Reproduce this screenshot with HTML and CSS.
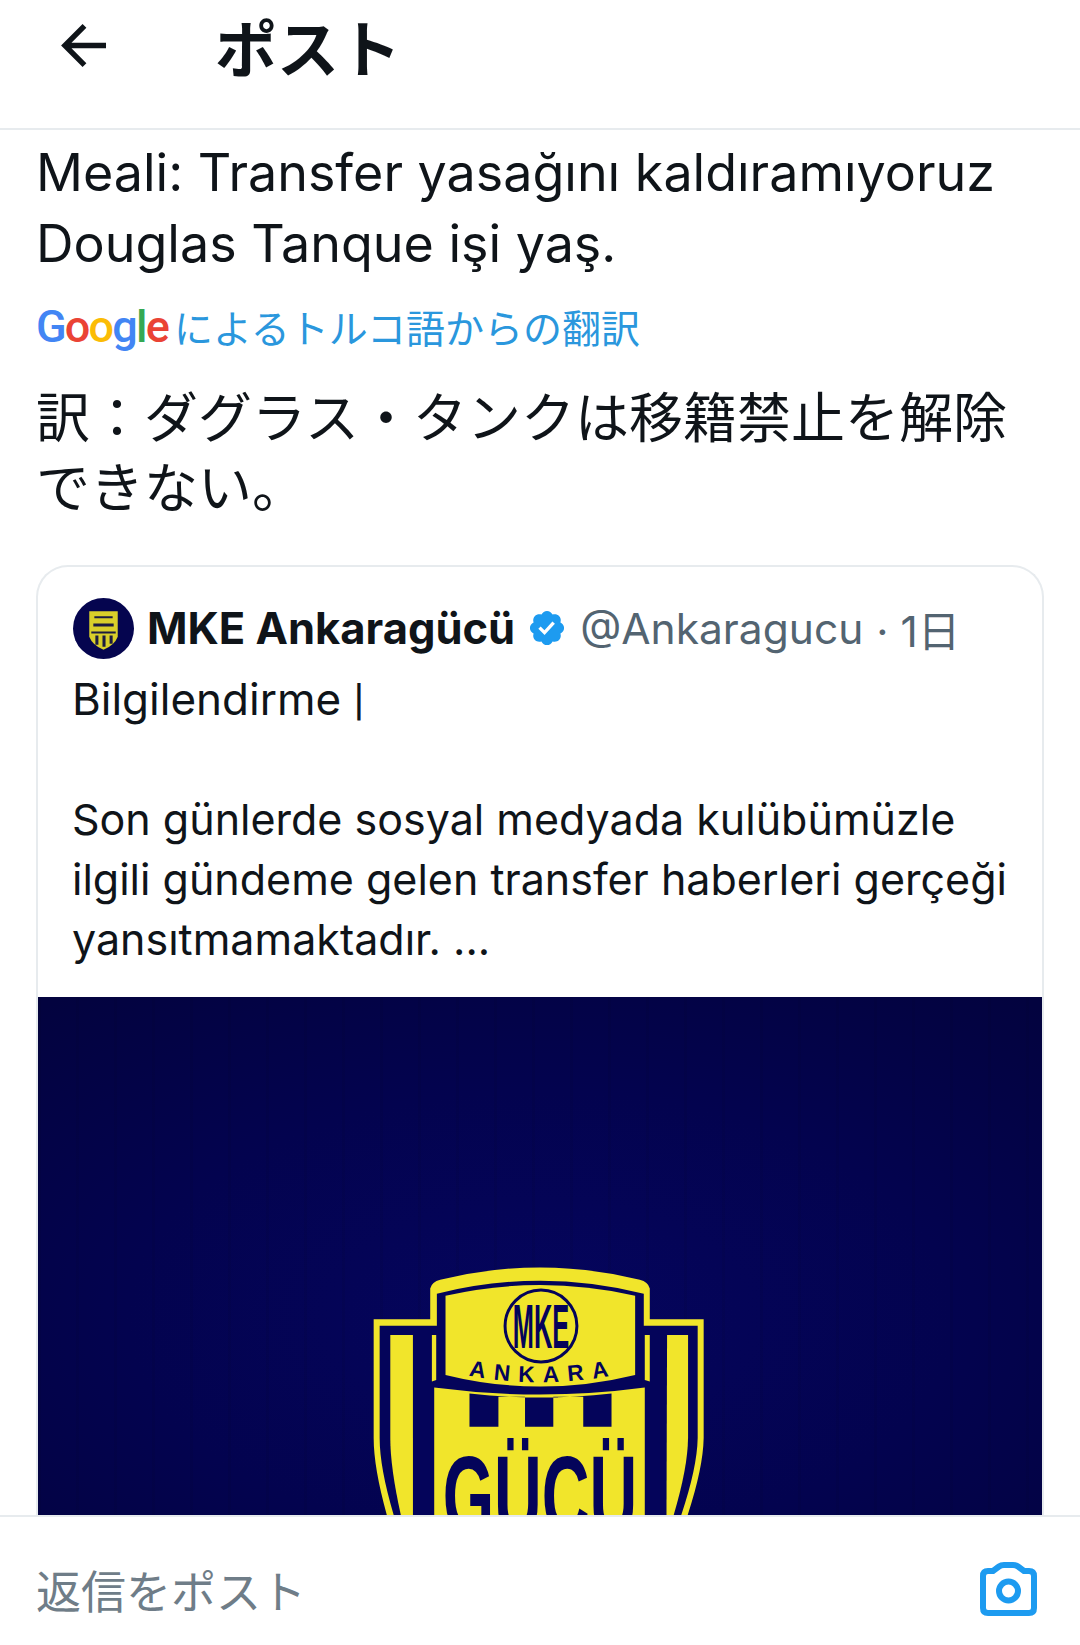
FILE: index.html
```html
<!DOCTYPE html>
<html lang="tr">

<head>
    <meta charset="UTF-8">
    <meta name="viewport" content="width=device-width, initial-scale=1.0">
    <link rel="stylesheet" href="styles.css">
</head>

<body>
    <div class="page">
        <header class="topbar">
            <svg class="back-icon" viewBox="0 0 48 48">
                <path d="M47 24H5M25 4L5 24l20 20" />
            </svg>
            <strong class="title" lang="ja">ポスト</strong>
        </header>

        <main class="content">
            <p class="tweet-text">Meali: Transfer yasağını kaldıramıyoruz<br>Douglas Tanque işi yaş.</p>

            <div class="translated-by">
                <span class="google">
                    <span class="g-blue">G</span><span class="g-red">o</span><span class="g-yellow">o</span><span class="g-blue">g</span><span class="g-green">l</span><span class="g-red">e</span>
                </span>
                <span class="translated-label" lang="ja">によるトルコ語からの翻訳</span>
            </div>

            <p class="translation" lang="ja">訳：ダグラス・タンクは移籍禁止を解除<br>できない。</p>

            <article class="quote">
                <div class="quote-head">
                    <svg class="avatar" viewBox="0 0 60 60">
                        <circle cx="30" cy="30" r="30" fill="#05054f" />
                        <path d="M16 13h28v25q-3 8-14 13q-11-5-14-13z" fill="#d9cf2a" />
                        <path d="M21 18h18v2H21zM20 25h20v3H20zM18 33h24v2H18zM22 37h3v9h-3zM29 37h3v11h-3zM36 37h3v8h-3z" fill="#1c1c40" />
                    </svg>
                    <strong class="quote-name">MKE Ankaragücü</strong>
                    <svg class="badge" viewBox="0 0 24 24">
                        <path d="M22.25 12c0-1.43-.88-2.67-2.19-3.34.46-1.39.2-2.9-.81-3.91s-2.52-1.27-3.91-.81c-.66-1.31-1.91-2.19-3.34-2.19s-2.67.88-3.33 2.19c-1.4-.46-2.91-.2-3.92.81s-1.26 2.52-.8 3.91c-1.31.67-2.2 1.91-2.2 3.34s.89 2.67 2.2 3.34c-.46 1.39-.21 2.9.8 3.91s2.52 1.26 3.91.81c.67 1.31 1.91 2.19 3.34 2.19s2.68-.88 3.34-2.19c1.39.45 2.9.2 3.91-.81s1.27-2.52.81-3.91c1.31-.67 2.19-1.91 2.19-3.34zm-11.71 4.2L6.8 12.46l1.41-1.42 2.26 2.26 4.8-5.23 1.47 1.36-6.2 6.77z" />
                    </svg>
                    <span class="quote-handle">@Ankaragucu</span>
                    <span class="quote-time" lang="ja">· 1日</span>
                </div>
                <p class="quote-text quote-lead">Bilgilendirme <span class="pipe">|</span></p>
                <p class="quote-text quote-para">Son günlerde sosyal medyada kulübümüzle<br>ilgili gündeme gelen transfer haberleri gerçeği<br>yansıtmamaktadır. ...</p>

                <div class="media">
                    <svg class="crest" viewBox="37 998 1006 560">
                        <defs>
                            <path id="city-arc" d="M385 412Q600 452 815 412" />
                        </defs>
                        <g transform="translate(340 1240) scale(.33333)">
                            <path d="M100 243H270V150Q275 130 300 124Q600 50 900 124Q925 130 930 150V243H1092V600Q1090 710 1020 900H160Q100 710 100 600Z" fill="#f1e52b" />
                            <path d="M118 262H290V166Q600 88 912 166V262H1074V600Q1072 710 1000 900H182Q118 710 118 600Z" fill="#04045a" />
                            <path d="M150 290H218V900H198Q150 710 150 600Z" fill="#f1e52b" />
                            <path d="M982 290H1045V600Q1044 710 980 900Z" fill="#f1e52b" />
                            <path d="M275 290H288V425L275 430ZM915 290H930V430L915 425Z" fill="#f1e52b" />
                            <path d="M316 172Q600 108 886 172V410Q600 480 316 410Z" fill="#f1e52b" />
                            <path d="M282 448Q600 490 915 448V900H282Z" fill="#f1e52b" />
                            <path d="M388 466Q600 490 815 466V566H730V476H640V566H555V476H475V566H388Z" fill="#04045a" />
                            <circle cx="603" cy="263" r="108" fill="none" stroke="#04045a" stroke-width="9" />
                            <text class="crest-mke" x="603" y="328" text-anchor="middle" textLength="170" lengthAdjust="spacingAndGlyphs">MKE</text>
                            <text class="crest-city"><textPath href="#city-arc" textLength="425" lengthAdjust="spacing">ANKARA</textPath></text>
                            <text class="crest-gucu" x="600" y="890" text-anchor="middle" textLength="585" lengthAdjust="spacingAndGlyphs">GÜCÜ</text>
                        </g>
                    </svg>
                </div>
            </article>
        </main>

        <footer class="reply-bar">
            <span class="reply-placeholder" lang="ja">返信をポスト</span>
            <svg class="camera" viewBox="0 0 57 54">
                <path d="M8 9h5l6-4.500Q21 3 24 3h9q3 0 5 1.500L44 9h5q5 0 5 5v32q0 5-5 5H8q-5 0-5-5V14q0-5 5-5z" />
                <circle cx="28.500" cy="29" r="9.500" />
            </svg>
        </footer>
    </div>
</body>

</html>
```

FILE: styles.css
```css
* {
    box-sizing: border-box;
}

body {
    margin: 0;
    background-color: #fff;
    color: #0f1419;
    font-family: Inter, "Noto Sans CJK JP", sans-serif;
}

p {
    margin: 0;
}

.page {
    display: flex;
    flex-direction: column;
    height: 1645px;
    overflow: hidden;
}

.topbar {
    display: flex;
    align-items: center;
    flex-shrink: 0;
    height: 130px;
    padding: 0 0 37px 60px;
    border-bottom: 2px solid #e7ebee;
    gap: 108px;
}

.back-icon {
    width: 47px;
    height: 47px;
    fill: none;
    stroke: #0f1419;
    stroke-width: 5.5;
}

.title {
    font-family: "Noto Sans CJK JP", sans-serif;
    font-size: 62px;
    font-weight: 700;
    line-height: 1;
}

.content {
    display: flex;
    flex: 1;
    flex-direction: column;
    min-height: 0;
    padding: 8px 36px 0;
}

.tweet-text {
    font-size: 52px;
    line-height: 70.500px;
}

.translated-by {
    display: flex;
    align-items: center;
    height: 48px;
    margin-top: 23px;
    gap: 6px;
}

.google {
    font-family: Roboto, sans-serif;
    font-size: 45px;
    font-weight: 500;
    letter-spacing: -1.800px;
    line-height: 1;
}

.g-blue { color: #4285f4; }
.g-red { color: #ea4335; }
.g-yellow { color: #fbbc05; }
.g-green { color: #34a853; }

.translated-label {
    color: #2a97dd;
    font-family: "Noto Sans CJK JP", sans-serif;
    font-size: 39px;
    line-height: 1;
}

.translation {
    margin-top: 30px;
    font-family: "Noto Sans CJK JP", sans-serif;
    font-size: 54px;
    line-height: 70px;
}

.quote {
    display: flex;
    flex: 1;
    flex-direction: column;
    min-height: 0;
    margin-top: 45px;
    overflow: hidden;
    border: 2px solid #e7ebee;
    border-bottom: 0;
    border-radius: 32px 32px 0 0;
}

.quote-head {
    display: flex;
    align-items: center;
    height: 62px;
    margin-top: 30px;
    padding-left: 35px;
}

.avatar {
    flex-shrink: 0;
    width: 61px;
    height: 61px;
}

.quote-name {
    margin-left: 13px;
    font-size: 43.500px;
    font-weight: 700;
}

.badge {
    width: 40px;
    height: 40px;
    margin-left: 12px;
    fill: #1d9bf0;
}

.quote-handle,
.quote-time {
    color: #536471;
    font-size: 42.500px;
}

.quote-handle {
    margin-left: 13px;
}

.quote-time {
    margin-left: 13px;
}

.quote-text {
    padding: 0 34px;
    font-size: 43px;
    line-height: 60px;
}

.quote-lead {
    margin-top: 10px;
    font-size: 44px;
}

.pipe {
    font-family: Roboto, sans-serif;
    font-weight: 400;
    line-height: 1;
}

.quote-para {
    margin-top: 60px;
}

.media {
    flex: 1;
    min-height: 0;
    margin-top: 28px;
    overflow: hidden;
    background-color: #03034f;
    background-image:
        repeating-linear-gradient(90deg, rgba(0, 0, 30, .08) 0 3px, rgba(0, 0, 30, 0) 3px 38px),
        radial-gradient(ellipse 75% 80% at 50% 62%, #05055e 0%, #03034f 55%, #03033f 100%);
}

.crest {
    display: block;
    width: 100%;
}

.crest text {
    fill: #04045a;
    font-family: "Liberation Sans", sans-serif;
    font-weight: 700;
}

.crest-mke {
    font-size: 190px;
}

.crest-city {
    font-size: 68px;
}

.crest-gucu {
    font-size: 340px;
}

.reply-bar {
    display: flex;
    align-items: center;
    justify-content: space-between;
    flex-shrink: 0;
    height: 130px;
    padding: 16px 43px 0 36px;
    background-color: #fff;
    border-top: 2px solid #e7ebee;
}

.reply-placeholder {
    color: #6f7d88;
    font-family: "Noto Sans CJK JP", sans-serif;
    font-size: 45px;
    line-height: 1;
}

.camera {
    width: 57px;
    height: 54px;
    fill: none;
    stroke: #1d9bf0;
    stroke-width: 6;
}
```
